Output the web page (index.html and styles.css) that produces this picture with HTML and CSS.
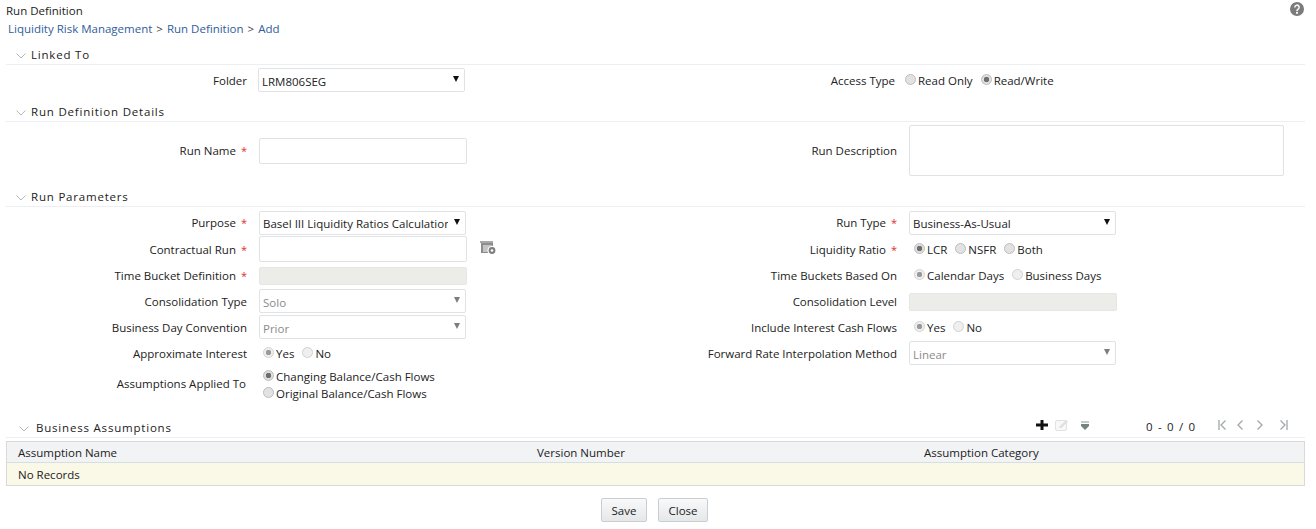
FILE: index.html
```html
<!DOCTYPE html>
<html lang="en">
<head>
    <meta charset="UTF-8">
    <meta name="viewport" content="width=device-width, initial-scale=1.0">
    <title>Run Definition</title>
    <link rel="stylesheet" href="styles.css">
</head>
<body>

<div class="page">
    <div class="page-top">
        <div class="page-title">Run Definition</div>
        <svg class="help-icon" width="14" height="14" viewBox="0 0 14 14">
            <circle cx="7" cy="7" r="7" fill="#7b7b7e"/>
            <path d="M4.800 5.400a2.200 2.200 0 1 1 3.300 1.900c-.7.4-1.100.8-1.100 1.600" fill="none" stroke="#f4f4f4" stroke-width="1.600"/>
            <rect x="6" y="9.800" width="2" height="2" fill="#f4f4f4"/>
        </svg>
    </div>
    <div class="breadcrumb">Liquidity Risk Management <span class="sep">&gt;</span> Run Definition <span class="sep">&gt;</span> Add</div>

    <div class="section-head first">
        <svg class="chevron" width="10" height="6" viewBox="0 0 10 6"><path d="M.5.5 5 5 9.500.5" fill="none" stroke="#b5b8ba"/></svg>
        <span class="section-title">Linked To</span>
    </div>
    <div class="form-grid linked-grid">
        <div class="label">Folder</div>
        <div class="select"><span class="select-text">LRM806SEG</span><i class="caret"></i></div>
        <div class="label label-tight">Access Type</div>
        <div class="radios radios-tight">
            <span class="radio"></span><span class="radio-text">Read Only</span>
            <span class="radio checked"></span><span class="radio-text">Read/Write</span>
        </div>
    </div>

    <div class="section-head">
        <svg class="chevron" width="10" height="6" viewBox="0 0 10 6"><path d="M.5.5 5 5 9.500.5" fill="none" stroke="#b5b8ba"/></svg>
        <span class="section-title">Run Definition Details</span>
    </div>
    <div class="form-grid details-grid">
        <div class="label">Run Name <span class="star">*</span></div>
        <div class="input run-name"></div>
        <div class="label">Run Description</div>
        <div class="textarea"></div>
    </div>

    <div class="section-head params-head">
        <svg class="chevron" width="10" height="6" viewBox="0 0 10 6"><path d="M.5.5 5 5 9.500.5" fill="none" stroke="#b5b8ba"/></svg>
        <span class="section-title">Run Parameters</span>
    </div>
    <div class="form-grid params-grid">
        <div class="label">Purpose <span class="star">*</span></div>
        <div class="select row-top"><span class="select-text">Basel III Liquidity Ratios Calculation</span><i class="caret"></i></div>
        <div class="label">Run Type <span class="star">*</span></div>
        <div class="select row-top"><span class="select-text">Business-As-Usual</span><i class="caret"></i></div>

        <div class="label row-second">Contractual Run <span class="star">*</span></div>
        <div class="input-wrap">
            <div class="input"></div>
            <svg class="lookup-icon" width="17" height="14" viewBox="0 0 17 14">
                <rect x="0" y="0" width="13" height="2" fill="#a8a8a8"/>
                <rect x="1" y="2" width="12" height="10" fill="#8c8c8c"/>
                <rect x="3" y="4" width="9" height="7" fill="#c4c4c4"/>
                <circle cx="12" cy="9.500" r="4.500" fill="#fff"/>
                <circle cx="12" cy="9.500" r="3.400" fill="#7f7f7f"/>
                <circle cx="12" cy="9.500" r="1.300" fill="#fff"/>
            </svg>
        </div>
        <div class="label row-second">Liquidity Ratio <span class="star">*</span></div>
        <div class="radios row-second">
            <span class="radio checked"></span><span class="radio-text">LCR</span>
            <span class="radio"></span><span class="radio-text">NSFR</span>
            <span class="radio"></span><span class="radio-text">Both</span>
        </div>

        <div class="label">Time Bucket Definition <span class="star">*</span></div>
        <div class="input disabled"></div>
        <div class="label">Time Buckets Based On</div>
        <div class="radios is-disabled">
            <span class="radio checked"></span><span class="radio-text">Calendar Days</span>
            <span class="radio"></span><span class="radio-text">Business Days</span>
        </div>

        <div class="label">Consolidation Type</div>
        <div class="select muted"><span class="select-text">Solo</span><i class="caret"></i></div>
        <div class="label">Consolidation Level</div>
        <div class="input disabled"></div>

        <div class="label">Business Day Convention</div>
        <div class="select muted"><span class="select-text">Prior</span><i class="caret"></i></div>
        <div class="label">Include Interest Cash Flows</div>
        <div class="radios is-disabled">
            <span class="radio checked"></span><span class="radio-text">Yes</span>
            <span class="radio"></span><span class="radio-text">No</span>
        </div>

        <div class="label">Approximate Interest</div>
        <div class="radios radios-left is-disabled">
            <span class="radio checked"></span><span class="radio-text">Yes</span>
            <span class="radio"></span><span class="radio-text">No</span>
        </div>
        <div class="label">Forward Rate Interpolation Method</div>
        <div class="select muted"><span class="select-text">Linear</span><i class="caret"></i></div>

        <div class="label label-applied">Assumptions Applied To</div>
        <div class="radio-stack">
            <div class="radios radios-left"><span class="radio checked"></span><span class="radio-text">Changing Balance/Cash Flows</span></div>
            <div class="radios radios-left"><span class="radio"></span><span class="radio-text">Original Balance/Cash Flows</span></div>
        </div>
    </div>

    <div class="section-head assumptions-head">
        <svg class="chevron" width="10" height="6" viewBox="0 0 10 6"><path d="M.5.5 5 5 9.500.5" fill="none" stroke="#b5b8ba"/></svg>
        <span class="section-title">Business Assumptions</span>
        <div class="toolbar">
            <svg class="tool-add" width="12" height="10" viewBox="0 0 12 10"><path d="M4.500 0h3v3.500H12v3H7.500V10h-3V6.500H0v-3h4.500z" fill="#111"/></svg>
            <svg class="tool-edit" width="15" height="11" viewBox="0 0 15 11">
                <rect x=".5" y=".5" width="11" height="10" rx="1.500" fill="#f8f8f8" stroke="#e2e2e2"/>
                <path d="M4.500 8V6.500L11 0l2 1.500L6.500 8z" fill="#e0e0e0"/>
            </svg>
            <svg class="tool-menu" width="8" height="9" viewBox="0 0 8 9">
                <rect y="0" width="8" height="2" fill="#c6cacb"/>
                <path d="M0 3h8v2L4 9 0 5z" fill="#72847f"/>
            </svg>
            <span class="pager-text">0 - 0 / 0</span>
            <svg class="pager-btn first-btn" width="8" height="10" viewBox="0 0 8 10"><path d="M1 0v10M7.500 .5 3 5l4.500 4.500" fill="none" stroke="#a2a7ab" stroke-width="1.300"/></svg>
            <svg class="pager-btn prev-btn" width="8" height="10" viewBox="0 0 8 10"><path d="M6.500.5 2 5l4.500 4.500" fill="none" stroke="#a2a7ab" stroke-width="1.300"/></svg>
            <svg class="pager-btn next-btn" width="8" height="10" viewBox="0 0 8 10"><path d="M1.500.5 6 5 1.500 9.500" fill="none" stroke="#a2a7ab" stroke-width="1.300"/></svg>
            <svg class="pager-btn last-btn" width="8" height="10" viewBox="0 0 8 10"><path d="M7 0v10M.5 .5 5 5 .5 9.500" fill="none" stroke="#a2a7ab" stroke-width="1.300"/></svg>
        </div>
    </div>
    <table class="grid-table">
        <thead>
            <tr>
                <th class="col-name">Assumption Name</th>
                <th class="col-version">Version Number</th>
                <th>Assumption Category</th>
            </tr>
        </thead>
        <tbody>
            <tr><td colspan="3">No Records</td></tr>
        </tbody>
    </table>

    <div class="actions">
        <button class="btn btn-save">Save</button>
        <button class="btn btn-close">Close</button>
    </div>
</div>

</body>
</html>
```

FILE: styles.css
```css
body {
    margin: 0;
    background-color: #fff;
    color: #222;
    font-family: "Open Sans", "Noto Sans", sans-serif;
    font-size: 11.5px;
}
.page {
    padding: 3px 11px 0 6px;
}
.page-top {
    display: flex;
    justify-content: space-between;
    height: 16px;
    line-height: 16px;
}
.help-icon {
    margin: -1px 1px 0 0;
}
.breadcrumb {
    margin: 2px 0 0 2px;
    height: 16px;
    line-height: 16px;
    color: #2f5d9b;
}
.sep {
    color: #444;
    margin: 0 1px;
}
.section-head {
    display: flex;
    align-items: center;
    height: 18px;
    margin-top: 11px;
    border-bottom: 1px solid #ebeff2;
}
.section-head.first {
    margin-top: 9px;
}
.params-head {
    margin-top: 12px;
}
.chevron {
    margin: 1px 5px 0 10px;
    flex: none;
}
.section-title {
    margin-top: -2px;
    letter-spacing: .8px;
}
.form-grid {
    display: grid;
    grid-template-columns: 253px 208px 442px 375px;
    align-items: center;
}
.linked-grid {
    margin-top: 3px;
    grid-template-rows: 24px;
}
.linked-grid .select {
    margin-left: -1px;
}
.details-grid {
    margin-top: 3px;
    grid-template-rows: 51px;
}
.params-grid {
    margin-top: 3px;
    grid-template-rows: 26px 27px 26px 26px 26px 26px 36px;
}
.label {
    text-align: right;
    padding-right: 12px;
    white-space: nowrap;
}
.params-grid .label,
.params-grid > .radios {
    margin-top: -2px;
}
.params-grid .row-second {
    margin-top: 0;
}
.label-tight {
    padding-right: 14px;
}
.params-grid .label-applied {
    padding-right: 13px;
    margin-top: -4px;
}
.star {
    color: #e0302a;
    margin-left: 2px;
    font-size: 11px;
}
.select {
    display: flex;
    align-items: center;
    justify-content: space-between;
    box-sizing: border-box;
    width: 207px;
    height: 24px;
    padding: 0 5px 0 3px;
    border: 1px solid #dfe3e6;
    border-radius: 2px;
    align-self: start;
}
.select.row-top {
    margin-top: 1px;
}
.select-text {
    overflow: hidden;
    white-space: nowrap;
    width: 185px;
    margin-top: 2px;
}
.select.row-top .select-text {
    margin-top: 0;
}
.caret {
    flex: none;
    width: 0;
    height: 0;
    margin-top: -2px;
    border-left: 3.500px solid transparent;
    border-right: 3.500px solid transparent;
    border-top: 6px solid #111;
}
.select.muted .select-text {
    color: #8b8b8b;
}
.select.muted .caret {
    border-top-color: #7d7d7d;
}
.input {
    box-sizing: border-box;
    width: 208px;
    height: 26px;
    border: 1px solid #dfe3e6;
    border-radius: 2px;
    flex: none;
}
.input.disabled {
    height: 18px;
    background-color: #ecece8;
    border-color: #e6e6e2;
}
.input-wrap {
    display: flex;
    align-self: start;
}
.lookup-icon {
    flex: none;
    margin: 5px 0 0 13px;
}
.textarea {
    box-sizing: border-box;
    width: 375px;
    height: 51px;
    border: 1px solid #dfe3e6;
    border-radius: 2px;
}
.radios {
    display: flex;
    align-items: center;
    padding-left: 5px;
    white-space: nowrap;
}
.radios-left {
    padding-left: 4px;
}
.radios-tight {
    margin-left: -9px;
}
.radio {
    flex: none;
    box-sizing: border-box;
    width: 11px;
    height: 11px;
    margin-top: -2px;
    border: 1px solid #bdbdbd;
    border-radius: 50%;
    background-color: #e2e2e2;
}
.radio.checked {
    background: radial-gradient(circle, #6e6e6e 0, #6e6e6e 2.500px, #dedede 3px);
}
.radio-text {
    margin: 0 8px 0 2px;
}
.is-disabled .radio {
    border-color: #d2d2d2;
    background-color: #efefef;
}
.is-disabled .radio.checked {
    background: radial-gradient(circle, #9a9a9a 0, #9a9a9a 2.500px, #efefef 3px);
}
.radio-stack {
    display: flex;
    flex-direction: column;
    gap: 2px;
    line-height: 15px;
}
.assumptions-head {
    margin-top: 16px;
}
.assumptions-head .chevron {
    margin: 1px 7px 0 13px;
}
.toolbar {
    display: flex;
    align-items: center;
    margin-left: auto;
    padding-right: 17px;
    margin-top: -6px;
}
.tool-edit {
    margin-left: 7px;
}
.tool-menu {
    margin-left: 11px;
}
.pager-text {
    margin: 3px 0 0 57px;
    width: 72px;
    letter-spacing: 1.200px;
}
.prev-btn {
    margin-left: 10px;
}
.next-btn {
    margin-left: 12px;
}
.last-btn {
    margin-left: 16px;
}
.grid-table {
    width: 1299px;
    margin-top: 3px;
    border-collapse: collapse;
    table-layout: fixed;
    border: 1px solid #d9d9d5;
}
.grid-table th {
    height: 20px;
    padding: 0 0 0 11px;
    text-align: left;
    font-weight: normal;
    background-color: #f1f3f5;
    border-bottom: 1px solid #d5dfe2;
}
.col-name {
    width: 508px;
}
.col-version {
    width: 376px;
}
.grid-table td {
    height: 22px;
    padding: 0 0 0 11px;
    background-color: #faf8e7;
}
.actions {
    display: flex;
    justify-content: center;
    gap: 11px;
    margin-top: 12px;
    padding-right: 2px;
}
.btn {
    box-sizing: border-box;
    height: 24px;
    padding: 0;
    font-family: inherit;
    font-size: 11.5px;
    color: #222;
    border: 1px solid #c8cfd3;
    border-radius: 2px;
    background: linear-gradient(#f9f9f9, #e5e7e9);
}
.btn-save {
    width: 46px;
}
.btn-close {
    width: 50px;
}
```
